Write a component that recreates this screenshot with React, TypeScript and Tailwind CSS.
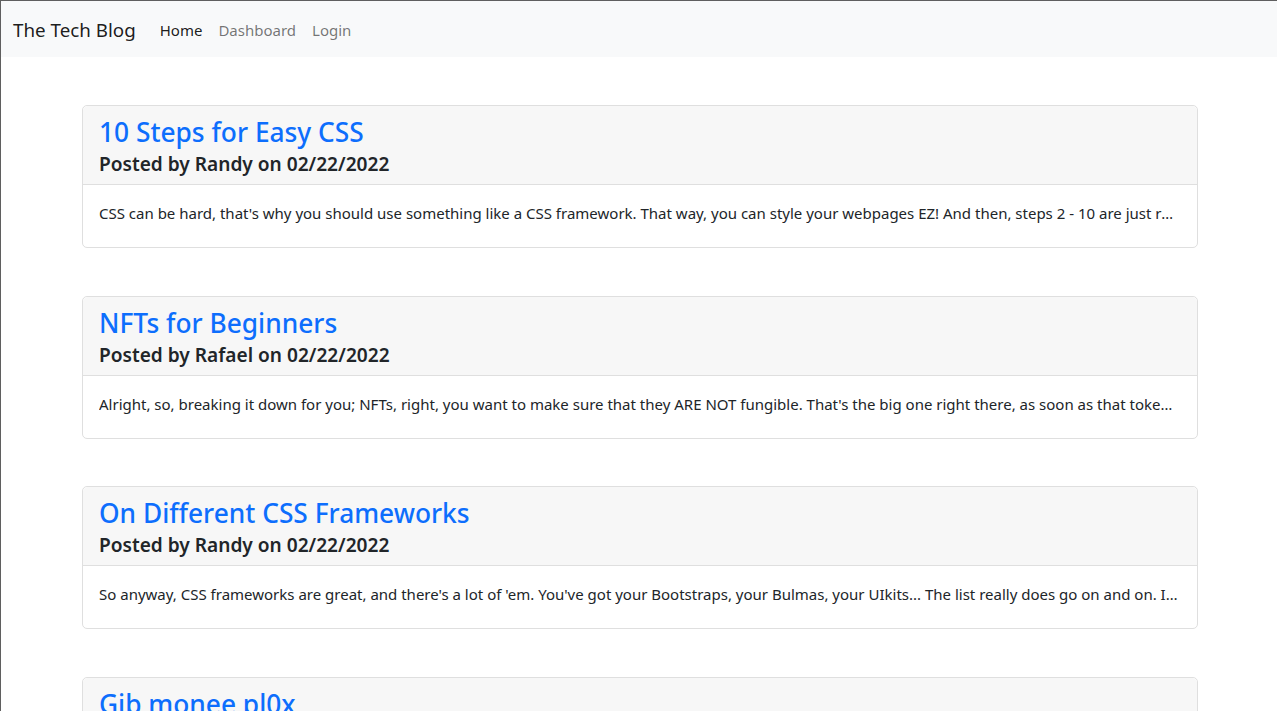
const posts = [
  {
    title: "10 Steps for Easy CSS",
    author: "Randy",
    date: "02/22/2022",
    body: "CSS can be hard, that's why you should use something like a CSS framework. That way, you can style your webpages EZ! And then, steps 2 - 10 are just really easy once you get the hang of it.",
  },
  {
    title: "NFTs for Beginners",
    author: "Rafael",
    date: "02/22/2022",
    body: "Alright, so, breaking it down for you; NFTs, right, you want to make sure that they ARE NOT fungible. That's the big one right there, as soon as that token becomes fungible, you're done.",
  },
  {
    title: "On Different CSS Frameworks",
    author: "Randy",
    date: "02/22/2022",
    body: "So anyway, CSS frameworks are great, and there's a lot of 'em. You've got your Bootstraps, your Bulmas, your UIkits... The list really does go on and on. I could keep going all day.",
  },
  {
    title: "Gib monee pl0x",
    author: "Rafael",
    date: "02/22/2022",
    body: "Seriously though, if you liked any of these posts, consider sending a little something our way.",
  },
];

const PostCard = ({ title, author, date, body }: { title: string; author: string; date: string; body: string }) => (
  <div className="mb-[47.5px] rounded-[5px] border border-[#dfdfdf] bg-white">
    <div className="border-b border-[#dfdfdf] bg-[#f7f7f7] px-4 pt-[9px] pb-[6px] rounded-t-[5px]">
      <h3 className="text-[26.3px] leading-[34px] font-medium text-[#0d6efd] mb-[1px]">
        <a href="#">{title}</a>
      </h3>
      <h5 className="text-[19.1px] leading-[28px] font-semibold text-[#212529]">
        Posted by {author} on {date}
      </h5>
    </div>
    <div className="px-4 pt-4 pb-[22px]">
      <p className="truncate text-[15px] leading-6 text-[#212529]">{body}</p>
    </div>
  </div>
);

const App = () => {
  return (
    <div className="min-h-screen bg-white border-t border-l border-[#5f5f5f] font-['Segoe_UI','Noto_Sans',sans-serif] text-[#212529]">
      <nav className="flex h-14 items-center bg-[#f8f9fa] pl-3 pt-[1px]">
        <a href="#" className="mr-4 text-[18.8px] leading-[30px] text-black/90">The Tech Blog</a>
        <ul className="flex text-[15px] leading-6">
          <li><a href="#" className="block px-2 text-black/90">Home</a></li>
          <li><a href="#" className="block px-2 text-black/55">Dashboard</a></li>
          <li><a href="#" className="block px-2 text-black/55">Login</a></li>
        </ul>
      </nav>
      <main className="ml-[81px] mt-12 w-[1116px]">
        {posts.map((p) => (
          <PostCard key={p.title} {...p} />
        ))}
      </main>
    </div>
  );
};

export default App;
